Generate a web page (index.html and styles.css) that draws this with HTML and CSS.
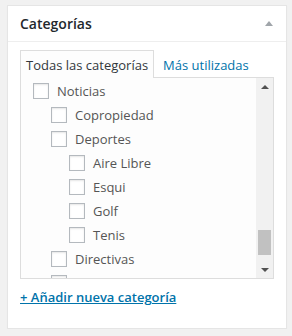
FILE: index.html
```html
<!DOCTYPE html>
<html lang="es">
<head>
<meta charset="utf-8">
<link rel="stylesheet" href="styles.css">
</head>
<body>
<div class="postbox">
  <div class="hndle">
    <h2 class="title">Categorías</h2>
    <span class="toggle"></span>
  </div>
  <div class="inside">
    <ul class="tabs">
      <li class="tab active">Todas las categorías</li>
      <li class="tab"><a href="#">Más utilizadas</a></li>
    </ul>
    <div class="panel">
      <div class="list-wrap">
        <ul class="checklist">
          <li class="row"><span class="cb"></span>Noticias</li>
          <li>
            <ul class="children">
              <li class="row"><span class="cb"></span>Copropiedad</li>
              <li class="row"><span class="cb"></span>Deportes</li>
              <li>
                <ul class="children">
                  <li class="row"><span class="cb"></span>Aire Libre</li>
                  <li class="row"><span class="cb"></span>Esqui</li>
                  <li class="row"><span class="cb"></span>Golf</li>
                  <li class="row"><span class="cb"></span>Tenis</li>
                </ul>
              </li>
              <li class="row"><span class="cb"></span>Directivas</li>
              <li class="row"><span class="cb"></span></li>
            </ul>
          </li>
        </ul>
      </div>
      <div class="scrollbar">
        <div class="sb-btn"><span class="arrow-up"></span></div>
        <div class="sb-track"><div class="sb-thumb"></div></div>
        <div class="sb-btn"><span class="arrow-down"></span></div>
      </div>
    </div>
    <div class="adder"><a href="#">+ Añadir nueva categoría</a></div>
  </div>
</div>
</body>
</html>
```
FILE: styles.css
```css
html, body {
  margin: 0;
  padding: 0;
  background: #f1f1f1;
}
body {
  font-family: "Open Sans", "Noto Sans", sans-serif;
  font-size: 13px;
  color: #444;
  padding: 5px 0 0 7px;
}
.postbox {
  width: 278px;
  background: #fff;
  border: 1px solid #e5e5e5;
  box-shadow: 0 1px 1px rgba(0, 0, 0, 0.04);
}
.hndle {
  height: 35px;
  display: flex;
  align-items: center;
  justify-content: space-between;
  padding: 0 13px 0 12px;
  border-bottom: 1px solid #eee;
}
.title {
  margin: 0;
  font-size: 14px;
  font-weight: 600;
  line-height: 19px;
  color: #23282d;
}
.toggle {
  width: 0;
  height: 0;
  border-left: 4px solid transparent;
  border-right: 4px solid transparent;
  border-bottom: 5px solid #a0a5aa;
}
.inside {
  padding: 8px 12px 22px;
}
.tabs {
  list-style: none;
  margin: 0;
  padding: 0;
  display: flex;
  position: relative;
  z-index: 1;
}
.tab {
  padding: 5px 5px 4px;
  line-height: 18px;
  border: 1px solid transparent;
  border-bottom: 0;
  margin-bottom: -1px;
  margin-right: 3px;
}
.tab.active {
  border-color: #ddd;
  background: #fdfdfd;
  color: #32373c;
}
.tab a {
  color: #0073aa;
  text-decoration: none;
}
.panel {
  height: 200px;
  border: 1px solid #ddd;
  background: #fdfdfd;
  display: flex;
}
.list-wrap {
  flex: 1;
  overflow: hidden;
  padding: 1px 0 0 12px;
}
.checklist, .children {
  list-style: none;
  margin: 0;
  padding: 0;
}
.children {
  margin-left: 18px;
}
.row {
  display: flex;
  align-items: center;
  height: 24px;
  line-height: 24px;
  color: #555;
}
.cb {
  box-sizing: border-box;
  width: 16px;
  height: 16px;
  border: 1px solid #b4b9be;
  background: #fff;
  box-shadow: inset 0 1px 2px rgba(0, 0, 0, 0.1);
  margin-right: 8px;
  flex: none;
}
.scrollbar {
  width: 17px;
  background: #f1f1f1;
  display: flex;
  flex-direction: column;
}
.sb-btn {
  height: 17px;
  display: flex;
  align-items: center;
  justify-content: center;
}
.sb-track {
  flex: 1;
}
.sb-thumb {
  margin: 135px 2px 0;
  height: 25px;
  background: #c1c1c1;
}
.arrow-up {
  width: 0;
  height: 0;
  border-left: 4px solid transparent;
  border-right: 4px solid transparent;
  border-bottom: 4px solid #505050;
}
.arrow-down {
  width: 0;
  height: 0;
  border-left: 4px solid transparent;
  border-right: 4px solid transparent;
  border-top: 4px solid #505050;
}
.adder {
  margin-top: 9px;
  line-height: 18px;
}
.adder a {
  color: #0073aa;
  font-weight: 600;
  text-decoration: underline;
}
```
